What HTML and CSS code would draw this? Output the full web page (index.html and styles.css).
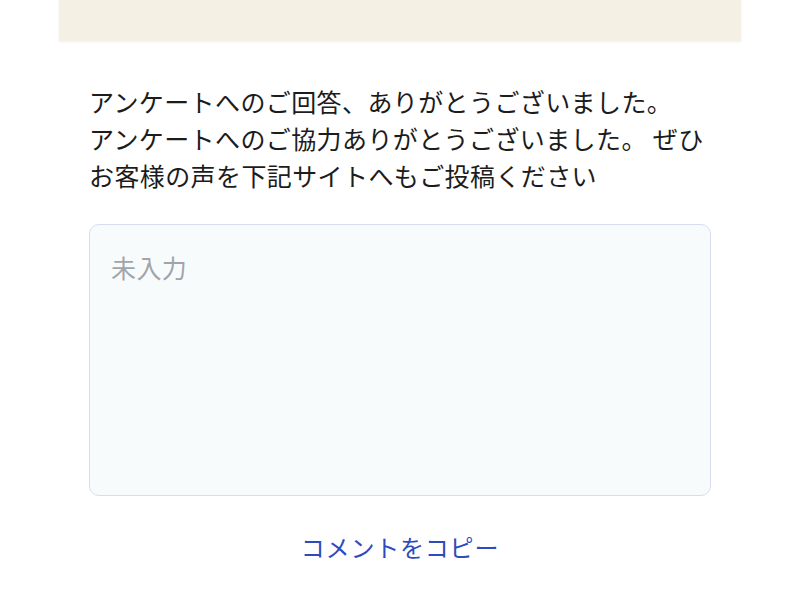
FILE: index.html
```html
<!DOCTYPE html>
<html lang="ja">
<head>
<meta charset="utf-8">
<link rel="stylesheet" href="styles.css">
</head>
<body>
<div class="page">
  <div class="banner"></div>
  <div class="content">
    <p class="message">アンケートへのご回答、ありがとうございました。<br>アンケートへのご協力ありがとうございました。 ぜひお客様の声を下記サイトへもご投稿ください</p>
    <textarea class="comment" placeholder="未入力"></textarea>
    <div class="actions">
      <button class="copy" type="button">コメントをコピー</button>
    </div>
  </div>
</div>
</body>
</html>
```

FILE: styles.css
```css
html, body {
  margin: 0;
  padding: 0;
  background: #ffffff;
}

body {
  font-family: "Noto Sans CJK JP", "Noto Sans", sans-serif;
  color: #1a1a1a;
}

.page {
  width: 682px;
  margin: 0 auto;
}

.banner {
  height: 41px;
  background: #f4f1e4;
  box-shadow: 0 1px 3px rgba(0, 0, 0, 0.06);
}

.content {
  padding: 42px 30px 0 30px;
  display: flex;
  flex-direction: column;
}

.message {
  margin: 0;
  font-size: 25px;
  line-height: 37px;
  letter-spacing: 0.4px;
  color: #1c1c1c;
}

.comment {
  display: block;
  box-sizing: border-box;
  margin-top: 30px;
  width: 622px;
  height: 272px;
  padding: 24px 21px;
  border: 1.5px solid #d8def2;
  border-radius: 10px;
  background: #f8fbfc;
  font-family: "Noto Sans CJK JP", "Noto Sans", sans-serif;
  font-size: 25px;
  line-height: 36px;
  letter-spacing: 0.4px;
  color: #1c1c1c;
  resize: none;
  outline: none;
}

.comment::placeholder {
  color: #a0a5ab;
}

.actions {
  display: flex;
  justify-content: center;
  margin-top: 33px;
}

.copy {
  border: none;
  background: none;
  padding: 0;
  font-family: "Noto Sans CJK JP", "Noto Sans", sans-serif;
  font-size: 24px;
  line-height: 36px;
  letter-spacing: 0.8px;
  color: #2d4bbd;
  cursor: pointer;
}
```
